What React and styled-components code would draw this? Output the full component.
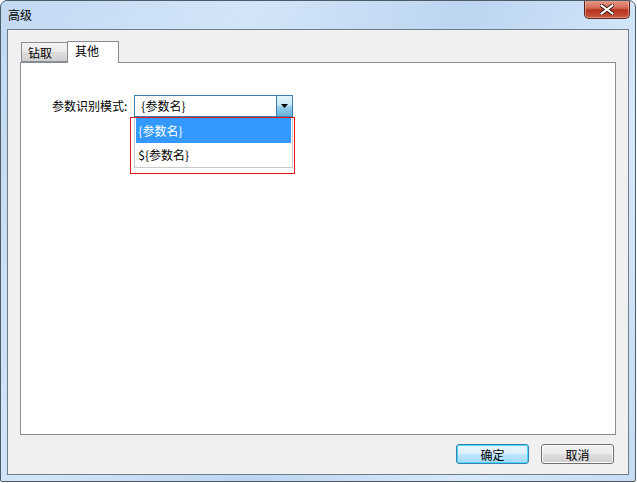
import React from "react";
import styled, { createGlobalStyle } from "styled-components";

const GlobalStyle = createGlobalStyle`
  html, body {
    margin: 0;
    padding: 0;
    background: #ffffff;
  }
  body {
    font-family: "Noto Sans CJK SC", "Liberation Sans", sans-serif;
    font-size: 12px;
    color: #000000;
  }
`;

const Window = styled.div`
  box-sizing: border-box;
  width: 636px;
  height: 482px;
  display: flex;
  flex-direction: column;
  border: 1px solid #4d5a68;
  border-radius: 7px 7px 2px 2px;
  background: linear-gradient(115deg, #c2d9f2 0%, #d3e5f8 30%, #bcd5f0 55%, #d8e9fb 80%, #c6dcf3 100%);
  overflow: hidden;
`;

const TitleBar = styled.div`
  height: 28px;
  display: flex;
  justify-content: space-between;
  align-items: flex-start;
  padding: 0 5px 0 7px;
`;

const Title = styled.div`
  line-height: 28px;
  font-size: 12px;
`;

const CloseButton = styled.div`
  box-sizing: border-box;
  width: 46px;
  height: 19px;
  margin-top: -1px;
  display: flex;
  align-items: center;
  justify-content: center;
  border: 1px solid #5a2620;
  border-top: none;
  border-radius: 0 0 5px 5px;
  background: linear-gradient(#e8a090 0%, #d36a55 45%, #b8331f 55%, #c65a3e 100%);
  box-shadow: inset 0 0 0 1px rgba(255, 200, 190, 0.5);
`;

const Client = styled.div`
  flex: 1;
  margin: 0 6px 6px 6px;
  display: flex;
  flex-direction: column;
  border: 1px solid #6f7d8b;
  background: #f0f0f0;
  padding: 11px 12px 0 12px;
`;

const TabStrip = styled.div`
  display: flex;
  align-items: flex-end;
  height: 21px;
  padding-left: 1px;
  position: relative;
  z-index: 1;
`;

const Tab = styled.div`
  box-sizing: border-box;
  height: ${(p) => (p.$active ? "22px" : "20px")};
  padding: ${(p) => (p.$active ? "1px 7px 0 7px" : "2px 6px 0 6px")};
  width: ${(p) => p.$width}px;
  border: 1px solid #898c95;
  border-bottom: ${(p) => (p.$active ? "none" : "1px solid #898c95")};
  margin-left: ${(p) => (p.$active ? "-1px" : "0")};
  background: ${(p) =>
    p.$active ? "#ffffff" : "linear-gradient(#f2f2f2 0%, #ebebeb 50%, #dddddd 51%, #cfcfcf 100%)"};
  margin-bottom: ${(p) => (p.$active ? "-1px" : "0")};
  line-height: 16px;
`;

const Panel = styled.div`
  box-sizing: border-box;
  height: 373px;
  border: 1px solid #898c95;
  background: #ffffff;
  padding: 32px 0 0 31px;
`;

const FieldRow = styled.div`
  display: flex;
  align-items: center;
  gap: 7px;
`;

const Label = styled.div`
  line-height: 22px;
`;

const ComboWrap = styled.div`
  position: relative;
`;

const Combo = styled.div`
  box-sizing: border-box;
  width: 159px;
  height: 22px;
  display: flex;
  border: 1px solid #3c7fb1;
  background: #ffffff;
`;

const ComboText = styled.div`
  flex: 1;
  padding-left: 6px;
  line-height: 20px;
`;

const ComboArrow = styled.div`
  box-sizing: border-box;
  width: 17px;
  height: 22px;
  margin: -1px -1px 0 0;
  display: flex;
  align-items: center;
  justify-content: center;
  border: 1px solid #3c7fb1;
  background: linear-gradient(#e5f4fc 0%, #c4e5f6 50%, #98d1ef 51%, #68b3db 100%);
`;

const DropList = styled.div`
  position: absolute;
  left: 0;
  top: 22px;
  box-sizing: border-box;
  width: 159px;
  border: 1px solid #c9c9c9;
  border-top: none;
  background: #ffffff;
  padding: 1px 0 1px 1px;
`;

const Item = styled.div`
  height: ${(p) => (p.$selected ? "25px" : "23px")};
  line-height: ${(p) => (p.$selected ? "25px" : "23px")};
  padding-left: 2px;
  margin-right: 1px;
  background: ${(p) => (p.$selected ? "#3399ff" : "transparent")};
  color: ${(p) => (p.$selected ? "#ffffff" : "#000000")};
`;

const Highlight = styled.div`
  position: absolute;
  left: -4px;
  top: 22px;
  width: 165px;
  height: 57px;
  box-sizing: border-box;
  border: 1px solid #e8161b;
  pointer-events: none;
`;

const ButtonRow = styled.div`
  display: flex;
  justify-content: flex-end;
  gap: 12px;
  padding: 9px 2px 0 0;
`;

const Button = styled.div`
  box-sizing: border-box;
  width: 73px;
  height: 20px;
  display: flex;
  align-items: center;
  justify-content: center;
  border-radius: 3px;
  border: 1px solid ${(p) => (p.$default ? "#3c7fb1" : "#707070")};
  background: ${(p) =>
    p.$default
      ? "linear-gradient(#eaf6fd 0%, #d9f0fc 50%, #bee6fd 51%, #a7d9f5 100%)"
      : "linear-gradient(#f2f2f2 0%, #ebebeb 50%, #dddddd 51%, #cfcfcf 100%)"};
  box-shadow: ${(p) => (p.$default ? "inset 0 0 0 1px #48d8fb" : "inset 0 0 0 1px #fcfcfc")};
`;

function CloseIcon() {
  return (
    <svg width="14" height="11" viewBox="0 0 14 11">
      <path
        d="M1.5 1.5 L12.5 9.5 M12.5 1.5 L1.5 9.5"
        stroke="#3d1a16"
        strokeWidth="4"
        strokeLinecap="square"
      />
      <path
        d="M1.5 1.5 L12.5 9.5 M12.5 1.5 L1.5 9.5"
        stroke="#ffffff"
        strokeWidth="2"
        strokeLinecap="square"
      />
    </svg>
  );
}

function ArrowIcon() {
  return (
    <svg width="7" height="4" viewBox="0 0 7 4">
      <path d="M0 0 H7 L3.5 4 Z" fill="#000000" />
    </svg>
  );
}

export default function App() {
  return (
    <>
      <GlobalStyle />
      <Window>
        <TitleBar>
          <Title>高级</Title>
          <CloseButton>
            <CloseIcon />
          </CloseButton>
        </TitleBar>
        <Client>
          <TabStrip>
            <Tab $width={47}>钻取</Tab>
            <Tab $active $width={52}>其他</Tab>
          </TabStrip>
          <Panel>
            <FieldRow>
              <Label>参数识别模式:</Label>
              <ComboWrap>
                <Combo>
                  <ComboText>{"{参数名}"}</ComboText>
                  <ComboArrow>
                    <ArrowIcon />
                  </ComboArrow>
                </Combo>
                <DropList>
                  <Item $selected>{"{参数名}"}</Item>
                  <Item>{"${参数名}"}</Item>
                </DropList>
                <Highlight />
              </ComboWrap>
            </FieldRow>
          </Panel>
          <ButtonRow>
            <Button $default>确定</Button>
            <Button>取消</Button>
          </ButtonRow>
        </Client>
      </Window>
    </>
  );
}
